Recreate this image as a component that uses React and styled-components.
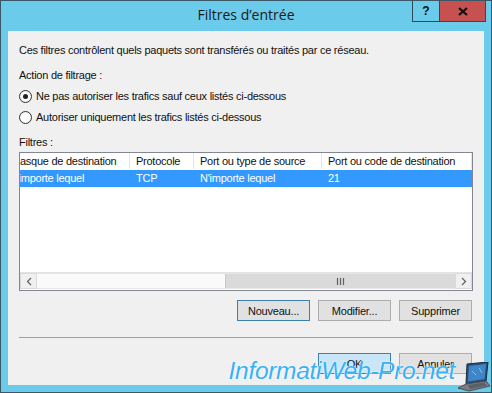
import React from "react";
import styled, { createGlobalStyle } from "styled-components";

const GlobalStyle = createGlobalStyle`
  html, body {
    margin: 0;
    padding: 0;
    background: #6bcbea;
  }
  * {
    box-sizing: border-box;
  }
`;

// columns of the list view, scrolled to the right
const columns = [
  { title: "Masque de destination", width: 125 },
  { title: "Protocole", width: 64 },
  { title: "Port ou type de source", width: 128 },
  { title: "Port ou code de destination", width: 150 },
];

const rows = [["N'importe lequel", "TCP", "N'importe lequel", "21"]];

const App = () => {
  return (
    <>
      <GlobalStyle />
      <Window>
        <TitleBar>
          <span />
          <Title>Filtres d’entrée</Title>
          <Controls>
            <HelpButton>?</HelpButton>
            <CloseButton>
              <svg width="10" height="9" viewBox="0 0 10 9">
                <path d="M1 1 L9 8 M9 1 L1 8" stroke="#111" strokeWidth="2.2" />
              </svg>
            </CloseButton>
          </Controls>
        </TitleBar>

        <Client>
          <Label $top={12}>
            Ces filtres contrôlent quels paquets sont transférés ou traités par ce réseau.
          </Label>
          <Label $top={11}>Action de filtrage :</Label>

          <RadioRow $top={8}>
            <Radio $checked />
            <span>Ne pas autoriser les trafics sauf ceux listés ci-dessous</span>
          </RadioRow>
          <RadioRow $top={8}>
            <Radio />
            <span>Autoriser uniquement les trafics listés ci-dessous</span>
          </RadioRow>

          <Label $top={11}>Filtres :</Label>

          <ListView>
            <ListBody>
              <Scrolled>
                <HeaderRow>
                  {columns.map((c) => (
                    <HeaderCell key={c.title} $width={c.width}>
                      {c.title}
                    </HeaderCell>
                  ))}
                </HeaderRow>
                {rows.map((r, i) => (
                  <DataRow key={i} $selected={i === 0}>
                    {r.map((v, j) => (
                      <DataCell key={j} $width={columns[j].width} $first={j === 0}>
                        {v}
                      </DataCell>
                    ))}
                  </DataRow>
                ))}
              </Scrolled>
            </ListBody>
            <HScroll>
              <ScrollArrow>
                <svg width="6" height="9" viewBox="0 0 6 9">
                  <path d="M5 1 L1.5 4.5 L5 8" stroke="#606060" strokeWidth="1.2" fill="none" />
                </svg>
              </ScrollArrow>
              <Track>
                <Thumb>
                  <svg width="9" height="7" viewBox="0 0 9 7">
                    <path d="M1.5 0 V7 M4.5 0 V7 M7.5 0 V7" stroke="#606060" strokeWidth="1.2" />
                  </svg>
                </Thumb>
              </Track>
              <ScrollArrow>
                <svg width="6" height="9" viewBox="0 0 6 9">
                  <path d="M1 1 L4.5 4.5 L1 8" stroke="#606060" strokeWidth="1.2" fill="none" />
                </svg>
              </ScrollArrow>
            </HScroll>
          </ListView>

          <ButtonRow $top={9}>
            <Button $focused>Nouveau...</Button>
            <Button>Modifier...</Button>
            <Button>Supprimer</Button>
          </ButtonRow>

          <Separator />

          <ButtonRow $top={15}>
            <Button $default>OK</Button>
            <Button>Annuler</Button>
          </ButtonRow>
        </Client>

        <Watermark>
          <WatermarkText>InformatiWeb-Pro.net</WatermarkText>
          <svg width="34" height="30" viewBox="0 0 34 30">
            <polygon points="10,2 31,0 29,19 9,22" fill="#2c4f7a" stroke="#1b2a3a" strokeWidth="1" />
            <polygon points="12,4 29,2 27.5,17 11,19.5" fill="#3f86c8" />
            <path d="M15 9 L19 13 M22 6 L25 11" stroke="#7fc0f0" strokeWidth="1" />
            <polygon points="9,22 29,19 33,24 12,29 1,26" fill="#7b7f85" stroke="#4a4d52" strokeWidth="1" />
            <polygon points="11,23 27,20.5 30,23.5 13,27" fill="#5b5f66" />
          </svg>
        </Watermark>
      </Window>
    </>
  );
};

const Window = styled.div`
  position: relative;
  width: 492px;
  height: 393px;
  background: #6bcbea;
  border: 1px solid #3a5866;
  display: flex;
  flex-direction: column;
  overflow: hidden;
`;

const TitleBar = styled.div`
  height: 30px;
  display: grid;
  grid-template-columns: 1fr auto 1fr;
  align-items: start;
`;

const Title = styled.div`
  font-family: "Open Sans", "Noto Sans", sans-serif;
  font-size: 14px;
  color: #1a1a1a;
  line-height: 16px;
  margin-top: 6px;
`;

const Controls = styled.div`
  justify-self: end;
  margin-right: 5px;
  margin-top: -1px;
  display: flex;
  border: 1px solid #2c4b58;
  height: 22px;
`;

const HelpButton = styled.div`
  width: 27px;
  display: flex;
  align-items: center;
  justify-content: center;
  font-family: "Liberation Sans", Arial, sans-serif;
  font-weight: bold;
  font-size: 12px;
  color: #111;
  border-right: 1px solid #2c4b58;
`;

const CloseButton = styled.div`
  width: 45px;
  background: #c75050;
  display: flex;
  align-items: center;
  justify-content: center;
`;

const Client = styled.div`
  flex: 1;
  margin: 0 7px 7px 7px;
  background: #f0f0f0;
  padding: 0 11px 0 11px;
  display: flex;
  flex-direction: column;
  font-family: "Liberation Sans", Arial, sans-serif;
  font-size: 11px;
  letter-spacing: -0.25px;
  color: #111;
`;

const Label = styled.div`
  margin-top: ${(p) => p.$top}px;
  line-height: 14px;
  height: 14px;
`;

const RadioRow = styled.div`
  margin-top: ${(p) => p.$top}px;
  display: flex;
  align-items: center;
  gap: 3px;
  height: 13px;
  line-height: 13px;
`;

const Radio = styled.span`
  width: 13px;
  height: 13px;
  border-radius: 50%;
  border: 1px solid #333;
  background: radial-gradient(circle, #ffffff 40%, #e6e6e6 100%);
  display: flex;
  align-items: center;
  justify-content: center;
  margin-right: 1px;

  &::after {
    content: "";
    width: 5px;
    height: 5px;
    border-radius: 50%;
    background: ${(p) => (p.$checked ? "#222" : "transparent")};
  }
`;

const ListView = styled.div`
  margin-top: 3px;
  height: 139px;
  border: 1px solid #828790;
  background: #fff;
  display: flex;
  flex-direction: column;
`;

const ListBody = styled.div`
  flex: 1;
  overflow: hidden;
  padding-right: 1px;
`;

const Scrolled = styled.div`
  margin-left: -15px;
  width: 482px;
`;

const HeaderRow = styled.div`
  display: flex;
  height: 17px;
  border-bottom: 1px solid #fff;
`;

const HeaderCell = styled.div`
  width: ${(p) => p.$width}px;
  flex: none;
  padding-left: 6px;
  line-height: 17px;
  border-right: 1px solid #e5e5e5;
  white-space: nowrap;
  overflow: hidden;
  color: #111;
`;

const DataRow = styled.div`
  display: flex;
  height: 17px;
  background: ${(p) => (p.$selected ? "#3399ff" : "transparent")};
  color: ${(p) => (p.$selected ? "#fff" : "#111")};
  margin-right: 11px;
`;

const DataCell = styled.div`
  width: ${(p) => p.$width}px;
  flex: none;
  padding-left: ${(p) => (p.$first ? 4 : 6)}px;
  line-height: 17px;
  white-space: nowrap;
  overflow: hidden;
`;

const HScroll = styled.div`
  height: 17px;
  display: flex;
  background: #f0f0f0;
  border-top: 1px solid #e3e3e3;
  margin-bottom: 1px;
`;

const ScrollArrow = styled.div`
  width: 17px;
  flex: none;
  display: flex;
  align-items: center;
  justify-content: center;
  border: 1px solid #dadada;
  background: #f0f0f0;
`;

const Track = styled.div`
  flex: 1;
  display: flex;
  justify-content: flex-end;
  background: #fafafa;
  border-top: 1px solid #e6e6e6;
  border-bottom: 1px solid #e6e6e6;
`;

const Thumb = styled.div`
  width: 230px;
  background: #dadada;
  border-left: 1px solid #c8c8c8;
  display: flex;
  align-items: center;
  justify-content: center;
`;

const ButtonRow = styled.div`
  margin-top: ${(p) => p.$top}px;
  margin-right: 1px;
  display: flex;
  justify-content: flex-end;
  gap: 8px;
`;

const Button = styled.button`
  width: 73px;
  height: 21px;
  padding: 0;
  font-family: "Liberation Sans", Arial, sans-serif;
  font-size: 11px;
  letter-spacing: -0.2px;
  color: #111;
  background: ${(p) => (p.$default ? "#c9e6f8" : "#e1e1e1")};
  border: 1px solid
    ${(p) => (p.$focused || p.$default ? "#3c7fb1" : "#adadad")};
`;

const Separator = styled.div`
  margin-top: 16px;
  height: 1px;
  background: #a0a0a0;
`;

const Watermark = styled.div`
  position: absolute;
  right: 0;
  bottom: 0;
  display: flex;
  align-items: flex-end;
  gap: 2px;
  pointer-events: none;
`;

const WatermarkText = styled.div`
  font-family: "Liberation Sans", Arial, sans-serif;
  font-style: italic;
  font-size: 24.5px;
  color: #39b1f5;
  margin-bottom: 7px;
  letter-spacing: -0.3px;
  text-shadow: 0 0 2px rgba(255, 255, 255, 0.9), 0 0 1px #fff;
`;

export default App;
